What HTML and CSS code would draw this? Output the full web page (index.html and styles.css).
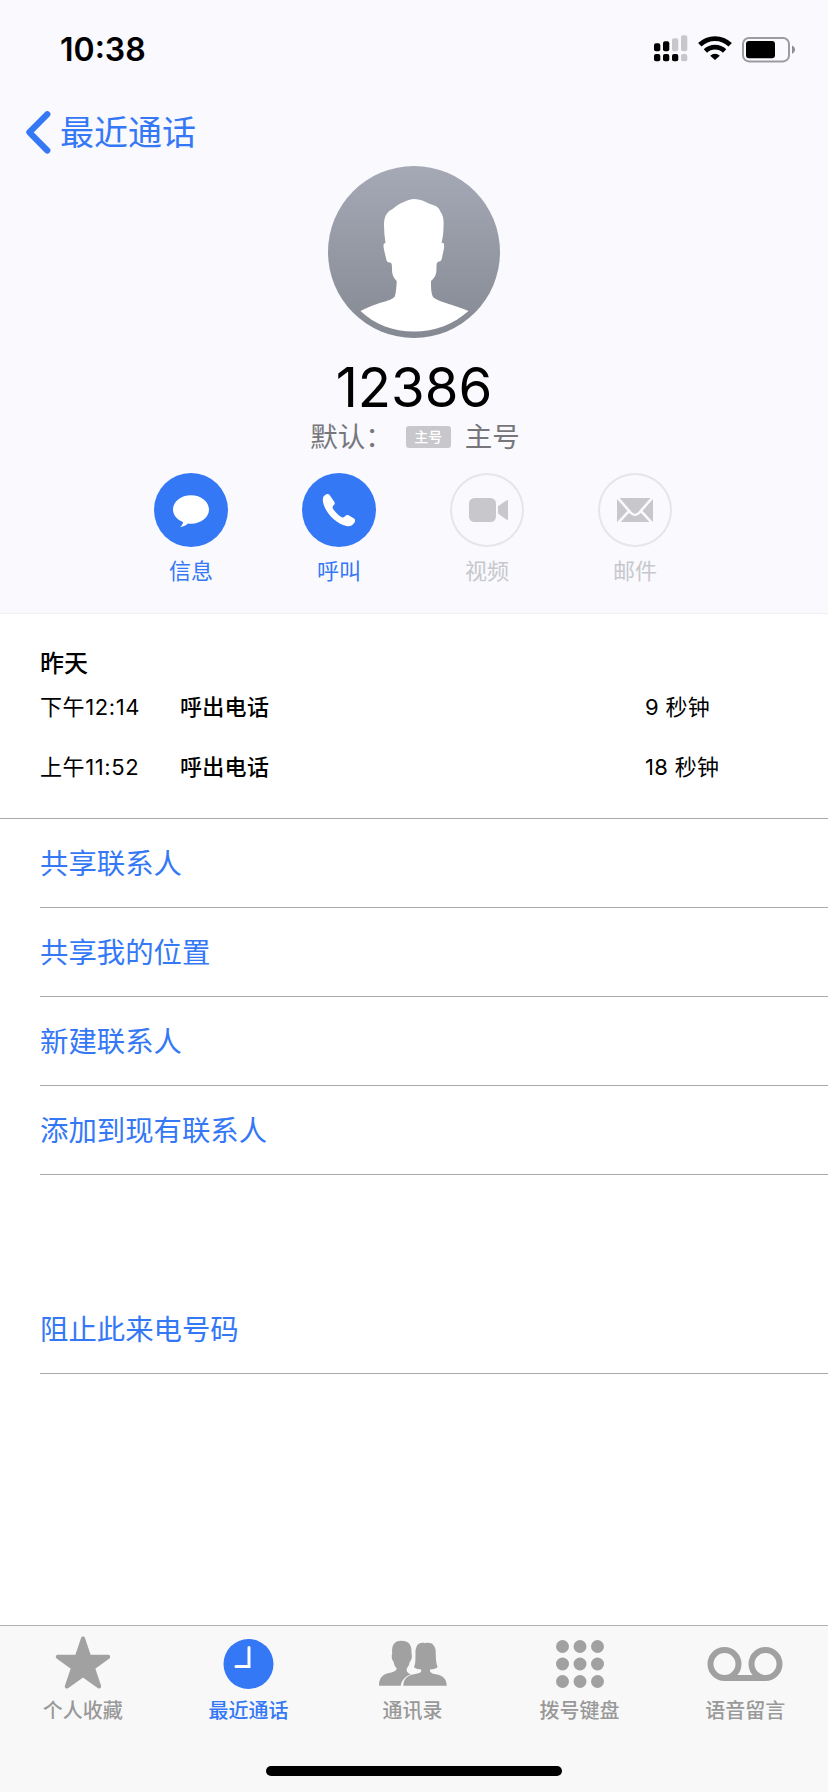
FILE: index.html
```html
<!DOCTYPE html>
<html lang="zh-CN">
<head>
    <meta charset="UTF-8">
    <meta name="viewport" content="width=device-width, initial-scale=1.0">
    <title>最近通话</title>
    <link rel="stylesheet" href="styles.css">
</head>
<body>
    <div class="phone">
        <header class="header">
            <div class="status-bar">
                <span class="time">10:38</span>
                <div class="status-icons">
                    <svg class="signal" width="34" height="27" viewBox="0 0 34 27">
                        <g fill="#000">
                            <rect x="0" y="8.3" width="6.3" height="8" rx="2"/>
                            <rect x="9" y="6.3" width="6.3" height="10" rx="2"/>
                            <rect x="0" y="19" width="6.3" height="7.3" rx="2"/>
                            <rect x="9" y="19" width="6.3" height="7.3" rx="2"/>
                            <rect x="18" y="19" width="6.3" height="7.3" rx="2"/>
                        </g>
                        <g fill="#c8c8cc">
                            <rect x="18" y="3.3" width="6.3" height="13" rx="2"/>
                            <rect x="27" y="0.3" width="6.3" height="16" rx="2"/>
                            <rect x="27" y="19" width="6.3" height="7.3" rx="2"/>
                        </g>
                    </svg>
                    <svg class="wifi" width="34" height="24" viewBox="0 0 34 24">
                        <g fill="none" stroke="#000" stroke-width="4.8">
                            <path d="M1.8 8.8a21.600 21.600 0 0 1 30.400 0"/>
                            <path d="M7.400 15a13.600 13.600 0 0 1 19.200 0"/>
                        </g>
                        <path d="M12.200 19.700a6.800 6.800 0 0 1 9.600 0L17 24z"/>
                    </svg>
                    <svg class="battery" width="54" height="26" viewBox="0 0 54 26">
                        <rect x="1" y="1" width="46" height="23.400" rx="6" fill="none" stroke="#9c9ca0" stroke-width="2"/>
                        <rect x="4" y="4" width="29" height="17.300" rx="3"/>
                        <path d="M50 8.600c4 1.800 4 6.400 0 8.200z" fill="#8e8e92"/>
                    </svg>
                </div>
            </div>

            <div class="nav">
                <svg width="25" height="43" viewBox="0 0 25 43">
                    <path d="M21.300 3.300L3.400 21.300l17.900 18.200" fill="none" stroke="#3478f6" stroke-width="6.200" stroke-linecap="round" stroke-linejoin="round"/>
                </svg>
                <span>最近通话</span>
            </div>

            <div class="contact">
                <svg class="avatar" width="172" height="172" viewBox="0 0 172 172">
                    <defs>
                        <linearGradient id="avatar-bg" x1="0" y1="0" x2="0" y2="1">
                            <stop offset="0" stop-color="#a5a9b6"/>
                            <stop offset="1" stop-color="#858992"/>
                        </linearGradient>
                    </defs>
                    <circle cx="86" cy="86" r="86" fill="url(#avatar-bg)"/>
                    <path fill="#fff" d="M86 33C92 33 97 35.500 102 38C107 39.500 111 41 112 45C115 49 116 53 115.500 60C115.500 66 115 71 113.500 77C117 76 116.500 81 115 87C114 91 114 96 111 95.500C109.500 95.500 108.500 97 108.500 100C108.500 107 108.500 110 103 115C103 121 103 126 104.500 130C106 134 118 137 124 139C130 141 136 143 140.500 145C126 158 107 165.500 86 165.500C65 165.500 46 158 32.500 145C38 142 43 140 49 138C56 135.500 65 134 67 130C68 126 68.500 121 68.700 115C65 111 64 108 64 103C64 100 64 96.500 62 96.500C58 97 58.500 93 57 88C56 83 54 77 57.500 77C56.500 71 56 65 56 59C56 52 58 46 64 43.500C68 40 72 37 77 35.500C80 34 83 33 86 33Z"/>
                </svg>
                <h1>12386</h1>
                <div class="line">
                    <span>默认：</span>
                    <span class="badge">主号</span>
                    <span>主号</span>
                </div>
            </div>

            <div class="actions">
                <div class="action">
                    <div class="circle">
                        <svg width="74" height="74" viewBox="0 0 74 74" fill="#fff">
                            <path d="M37 22.300c10 0 18 6.300 18 14.300s-8 14.200-18 14.200c-1 0-2 0-3-.2-1.800 1.700-4.200 3.200-8 3.300 1.800-1.300 2.800-3 3.200-4.700C23 46.800 19 42 19 36.600c0-8 8-14.300 18-14.300z"/>
                        </svg>
                    </div>
                    <span>信息</span>
                </div>
                <div class="action">
                    <div class="circle">
                        <svg width="74" height="74" viewBox="0 0 74 74" fill="#fff">
                            <path d="M22.500 22.600c1.600-1.400 3.500-2.200 4.900-.9l5 7.300c.7 1.200.4 2-.5 3-1.600 1.600-1.700 2.600-.6 4.300 2.200 3.200 4.800 5.700 8 7.800 1.500.9 2.400.5 3.700-.8 1.200-1.300 2.200-1.800 3.700-1l5.300 3.300c1.500 1 1.300 2.300.5 4-1.700 3-4.600 4.200-8 3.400C32.500 50.400 22 37.500 20.900 28c-.2-2.300.2-4.200 1.600-5.400z"/>
                        </svg>
                    </div>
                    <span>呼叫</span>
                </div>
                <div class="action disabled">
                    <div class="circle">
                        <svg width="74" height="74" viewBox="0 0 74 74" fill="#c7c7cc">
                            <rect x="19" y="25" width="27" height="24" rx="5.500"/>
                            <path d="M48 33.300l7.500-5.200c1.300-.8 2.500-1.100 2.500-1.100v20s-1.300-.2-2.500-1L48 40.500z"/>
                        </svg>
                    </div>
                    <span>视频</span>
                </div>
                <div class="action disabled">
                    <div class="circle">
                        <svg width="74" height="74" viewBox="0 0 74 74">
                            <rect x="19" y="25" width="36" height="24" fill="#c7c7cc"/>
                            <g fill="none" stroke="#f9f9fe" stroke-width="2.600">
                                <path d="M19.300 24.300L32.500 39.500c3 3.300 6 3.300 9 0L54.700 24.300"/>
                                <path d="M20.300 49.700l11.500-12.500M53.700 49.700L42.200 37.200"/>
                            </g>
                        </svg>
                    </div>
                    <span>邮件</span>
                </div>
            </div>
        </header>

        <section class="calls">
            <h2>昨天</h2>
            <div class="call">
                <span class="at">下午12:14</span>
                <span class="type">呼出电话</span>
                <span>9 秒钟</span>
            </div>
            <div class="call">
                <span class="at">上午11:52</span>
                <span class="type">呼出电话</span>
                <span>18 秒钟</span>
            </div>
        </section>

        <ul class="options">
            <li>共享联系人</li>
            <li>共享我的位置</li>
            <li>新建联系人</li>
            <li>添加到现有联系人</li>
            <li class="block">阻止此来电号码</li>
        </ul>

        <nav class="tabs">
            <div class="tab">
                <svg width="80" height="60" viewBox="0 0 80 60">
                    <path d="M40 6.500l6.200 18.300h19L50 36l6.200 18.500L40 43.100 23.800 54.500 30 36 14.800 24.800h19z" fill="#a1a1a1" stroke="#a1a1a1" stroke-width="4" stroke-linejoin="round"/>
                </svg>
                <span>个人收藏</span>
            </div>
            <div class="tab active">
                <svg width="80" height="60" viewBox="0 0 80 60">
                    <circle cx="40.500" cy="32" r="25" fill="#3478f6"/>
                    <path d="M41 15.500v19H28" fill="none" stroke="#fff" stroke-width="3" stroke-linecap="round"/>
                </svg>
                <span>最近通话</span>
            </div>
            <div class="tab">
                <svg width="80" height="60" viewBox="0 0 80 60" fill="#a1a1a1">
                    <path d="M27.500 8.700C34 8.700 38 12 37.500 21c1 3 .3 7-1.800 9-.4 3-1.500 4.500-3 6.500v2.500c.5 1.500 2.300 2.600 4.300 3.200-5.500 2-9.500 6-10.300 11.500H5c0-6.500 2.500-10.500 8-12.200 5-1.300 9-1.500 9.700-5-1.500-2-2.600-3.500-3-6.500-2-2-2.500-6-1.500-9C17.500 13.500 20 8.700 27.500 8.700z"/>
                    <path d="M51 11.200c6.500-1.700 10.500 2 10.700 8.300 0 6.500.3 11.500 1.900 15.800-2.300 1.700-5 2.200-7.600 2.200v1.800c1 2.200 3.500 2.600 6 3 6.500 1.200 10.700 4.200 10.700 11.400H29.300c.3-7.200 4.500-10.200 10.700-11.400 3-.6 6.500-.8 7.200-3v-1.800c-2.700 0-5.200-.5-7.200-2.200 2-4.500 1.300-9.500 1.500-15.500.2-6 3-10.300 9.500-8.600z"/>
                </svg>
                <span class="contacts">通讯录</span>
            </div>
            <div class="tab">
                <svg width="80" height="60" viewBox="0 0 80 60" fill="#a1a1a1">
                    <circle cx="22.500" cy="14.500" r="6.500"/>
                    <circle cx="40" cy="14.500" r="6.500"/>
                    <circle cx="57.500" cy="14.500" r="6.500"/>
                    <circle cx="22.500" cy="32" r="6.500"/>
                    <circle cx="40" cy="32" r="6.500"/>
                    <circle cx="57.500" cy="32" r="6.500"/>
                    <circle cx="22.500" cy="49.500" r="6.500"/>
                    <circle cx="40" cy="49.500" r="6.500"/>
                    <circle cx="57.500" cy="49.500" r="6.500"/>
                </svg>
                <span>拨号键盘</span>
            </div>
            <div class="tab">
                <svg width="80" height="60" viewBox="0 0 80 60" fill="none" stroke="#a1a1a1" stroke-width="6">
                    <circle cx="19.500" cy="32" r="14"/>
                    <circle cx="60.500" cy="32" r="14"/>
                    <path d="M19.500 46h41"/>
                </svg>
                <span>语音留言</span>
            </div>
        </nav>
        <div class="home">
            <div class="home-bar"></div>
        </div>
    </div>
</body>
</html>
```
FILE: styles.css
```css
* {
    box-sizing: border-box;
}
body {
    margin: 0;
    font-family: Inter, "Noto Sans CJK SC", sans-serif;
    background-color: #fff;
    color: #000;
}
.phone {
    display: flex;
    flex-direction: column;
    width: 828px;
    height: 1792px;
}
.header {
    height: 614px;
    background-color: #f9f9fe;
    border-bottom: 1px solid #efeff4;
}
.status-bar {
    display: flex;
    justify-content: space-between;
    height: 100px;
    padding: 0 32px 0 60px;
}
.time {
    margin-top: 30px;
    font-size: 32px;
    font-weight: 600;
    line-height: 40px;
}
.status-icons {
    display: flex;
    align-items: flex-start;
    padding-top: 35px;
}
.wifi {
    margin: 1px 0 0 10px;
}
.battery {
    margin: 2px 0 0 10px;
}
.nav {
    display: flex;
    align-items: center;
    gap: 9px;
    height: 64px;
    padding-left: 26px;
    color: #3478f6;
    font-size: 34px;
    line-height: 48px;
}
.nav span {
    padding-top: 2px;
}
.contact {
    display: flex;
    flex-direction: column;
    align-items: center;
    padding-top: 2px;
}
.avatar {
    display: block;
}
h1 {
    margin: 17px 0 0;
    font-size: 54.5px;
    font-weight: 400;
    line-height: 64px;
}
.line {
    display: flex;
    align-items: center;
    height: 36px;
    padding-left: 2px;
    color: #77777b;
    font-size: 27.5px;
    line-height: 36px;
}
.badge {
    width: 45px;
    height: 22px;
    margin: 0 14px 0 13px;
    border-radius: 3px;
    background-color: #c7c7cc;
    color: #fff;
    font-size: 14px;
    font-weight: 500;
    line-height: 22px;
    text-align: center;
}
.actions {
    display: flex;
    justify-content: center;
    gap: 74px;
    padding: 18px 2px 0 0;
}
.action {
    width: 74px;
    color: #3478f6;
    font-size: 22px;
    line-height: 30px;
    text-align: center;
}
.circle {
    height: 74px;
    margin-bottom: 9px;
    border-radius: 50%;
    background-color: #3478f6;
}
.disabled {
    color: #c7c7cc;
}
.disabled .circle {
    background-color: transparent;
    box-shadow: inset 0 0 0 2px #e5e5ea;
}
.calls {
    height: 205px;
    padding: 34px 40px 0;
    border-bottom: 1px solid #aaa;
}
h2 {
    margin: 0;
    font-size: 24px;
    font-weight: 500;
    line-height: 32px;
}
.call {
    display: grid;
    grid-template-columns: 140px 465px 1fr;
    height: 60px;
    font-size: 22px;
    letter-spacing: 0.3px;
    line-height: 54px;
}
.at {
    letter-spacing: 0.6px;
}
.type {
    font-weight: 500;
}
.options {
    flex: 1;
    margin: 0;
    padding: 0 0 0 40px;
    list-style: none;
}
.options li {
    height: 89px;
    border-bottom: 1px solid #aaa;
    color: #3478f6;
    font-size: 28.4px;
    line-height: 90px;
}
.options .block {
    margin-top: 110px;
}
.tabs {
    display: flex;
    height: 117px;
    border-top: 1px solid #b2b2b2;
    background-color: #f8f8f8;
}
.tab {
    display: flex;
    flex: 1;
    flex-direction: column;
    align-items: center;
    padding-top: 6px;
    color: #999;
    font-size: 20px;
    font-weight: 500;
    line-height: 28px;
}
.tab svg {
    margin-bottom: 5px;
}
.active {
    color: #3478f6;
}
.contacts {
    padding-right: 3px;
}
.home {
    display: flex;
    justify-content: center;
    height: 50px;
    padding-top: 24px;
    background-color: #f8f8f8;
}
.home-bar {
    width: 296px;
    height: 10px;
    border-radius: 5px;
    background-color: #000;
}
```
